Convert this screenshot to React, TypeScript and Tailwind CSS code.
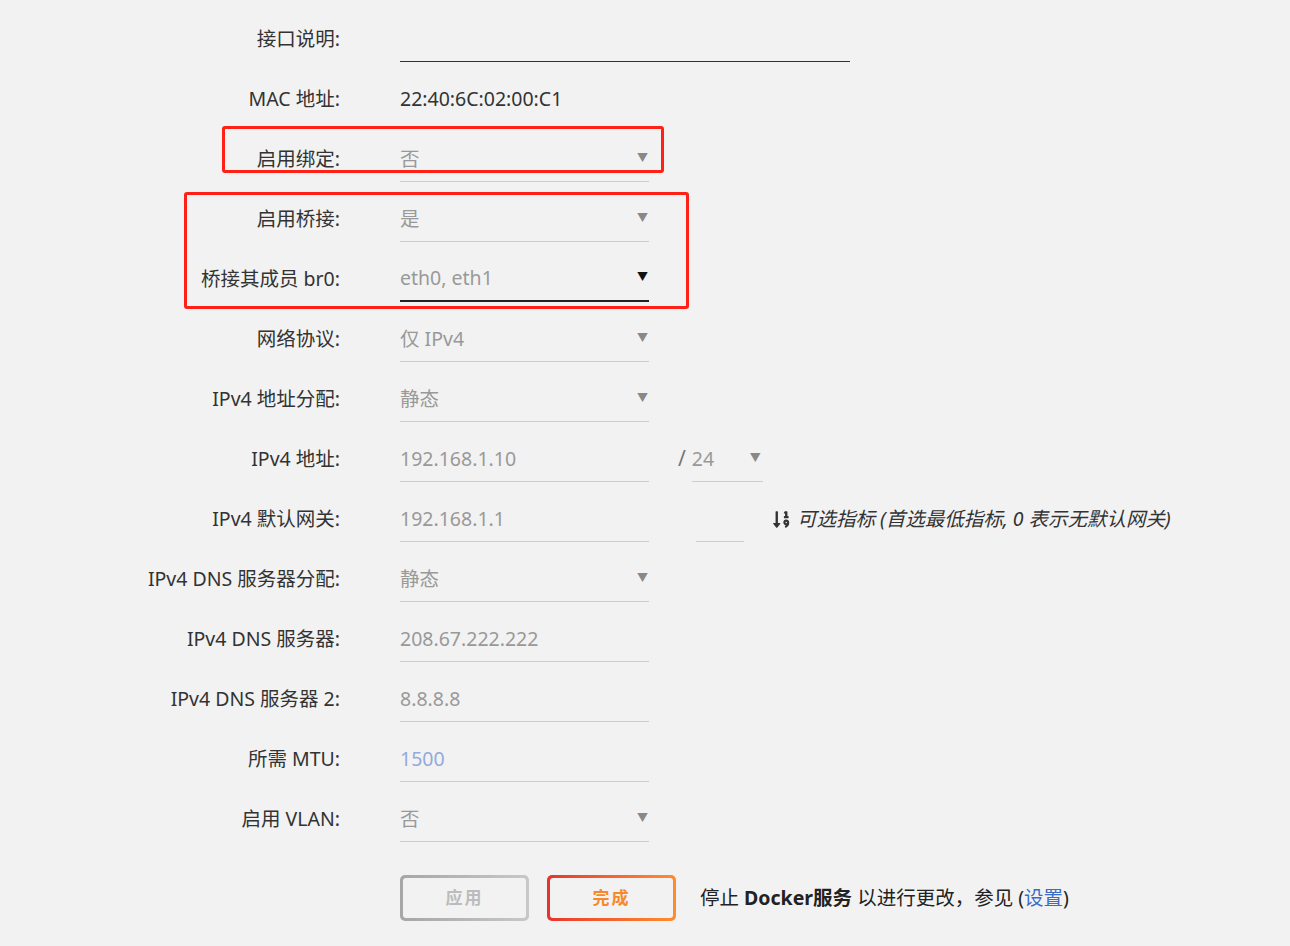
import React from 'react';
import { FaSortNumericDown } from 'react-icons/fa';

const font = { fontFamily: '"Noto Sans", "Noto Sans CJK SC", sans-serif' };

type Row = {
  label: string;
  value?: string;
  kind: 'text' | 'plain' | 'select';
  valueClass?: string;
  line?: string;
  arrowClass?: string;
  extra?: React.ReactNode;
};

function Arrow({ className }: { className?: string }) {
  return <span className={`block mb-[3px] text-[11px] leading-none ${className ?? 'text-[#888]'}`}>▼</span>;
}

const rows: Row[] = [
  { label: '接口说明:', kind: 'text', value: '', line: 'w-[450px] border-b border-[#333]' },
  { label: 'MAC 地址:', kind: 'plain', value: '22:40:6C:02:00:C1' },
  { label: '启用绑定:', kind: 'select', value: '否' },
  { label: '启用桥接:', kind: 'select', value: '是' },
  { label: '桥接其成员 br0:', kind: 'select', value: 'eth0, eth1', line: 'w-[249px] border-b-2 border-[#222]', arrowClass: 'text-[#111]' },
  { label: '网络协议:', kind: 'select', value: '仅 IPv4' },
  { label: 'IPv4 地址分配:', kind: 'select', value: '静态' },
  {
    label: 'IPv4 地址:',
    kind: 'text',
    value: '192.168.1.10',
    extra: (
      <div className="flex items-start ml-[29px]">
        <div className="h-[46px] flex items-center text-[#777] text-[21px] mr-[6px]">/</div>
        <div className="w-[71px] h-[46px] border-b border-[#ccc] flex items-center justify-between pr-[2px]">
          <span className="text-[#999]">24</span>
          <Arrow />
        </div>
      </div>
    ),
  },
  {
    label: 'IPv4 默认网关:',
    kind: 'text',
    value: '192.168.1.1',
    extra: (
      <div className="flex items-start ml-[47px]">
        <div className="w-[48px] h-[46px] border-b border-[#ccc]" />
        <div className="h-[46px] flex items-center ml-[28px] text-[#333] italic">
          <FaSortNumericDown className="w-[19px] h-[19px] mr-[6px] text-[#333]" />
          <span>可选指标 (首选最低指标, 0 表示无默认网关)</span>
        </div>
      </div>
    ),
  },
  { label: 'IPv4 DNS 服务器分配:', kind: 'select', value: '静态' },
  { label: 'IPv4 DNS 服务器:', kind: 'text', value: '208.67.222.222' },
  { label: 'IPv4 DNS 服务器 2:', kind: 'text', value: '8.8.8.8' },
  { label: '所需 MTU:', kind: 'text', value: '1500', valueClass: 'text-[#93aadb]' },
  { label: '启用 VLAN:', kind: 'select', value: '否' },
];

export default function App() {
  return (
    <div className="min-h-screen w-full bg-[#f2f2f2] text-[19.5px] text-[#333]" style={font}>
      <div className="relative pt-[16px]">
        {rows.map((row, i) => (
          <div key={i} className="flex items-start h-[60px]">
            <div className="w-[340px] h-[45px] flex items-center justify-end">{row.label}</div>
            <div className="ml-[60px] flex items-start">
              {row.kind === 'plain' ? (
                <div className="h-[46px] flex items-center text-[#333]">{row.value}</div>
              ) : (
                <div
                  className={`h-[46px] flex items-center justify-between ${row.line ?? 'w-[249px] border-b border-[#ccc]'}`}
                >
                  <span className={row.valueClass ?? 'text-[#999]'}>{row.value}</span>
                  {row.kind === 'select' && (
                    <span className="pr-[1px]">
                      <Arrow className={row.arrowClass} />
                    </span>
                  )}
                </div>
              )}
              {row.extra}
            </div>
          </div>
        ))}

        {/* Buttons */}
        <div className="flex items-center mt-[19px] ml-[400px]">
          <div className="w-[129px] h-[46px] rounded-[5px] p-[3px] bg-gradient-to-r from-[#a6a6a6] to-[#c8c8c8]">
            <div className="w-full h-full rounded-[3px] bg-[#f2f2f2] flex items-center justify-center text-[17px] tracking-[2px] font-bold text-[#bcbcbc]">
              应用
            </div>
          </div>
          <div className="ml-[18px] w-[129px] h-[46px] rounded-[5px] p-[3px] bg-gradient-to-r from-[#e8312e] to-[#ff8c2e]">
            <div className="w-full h-full rounded-[3px] bg-[#f2f2f2] flex items-center justify-center text-[17px] tracking-[2px] font-bold text-[#f7892b]">
              完成
            </div>
          </div>
          <div className="ml-[24px] text-[#222]">
            停止 <span className="font-bold">Docker服务</span> 以进行更改，参见 (<span className="text-[#3a6cc8]">设置</span>)
          </div>
        </div>

        {/* annotation boxes */}
        <div className="absolute left-[222px] top-[126px] w-[442px] h-[47px] border-[3px] border-[#ff2016] rounded-[3px] pointer-events-none" />
        <div className="absolute left-[184px] top-[192px] w-[505px] h-[117px] border-[3px] border-[#ff2016] rounded-[3px] pointer-events-none" />
      </div>
    </div>
  );
}
